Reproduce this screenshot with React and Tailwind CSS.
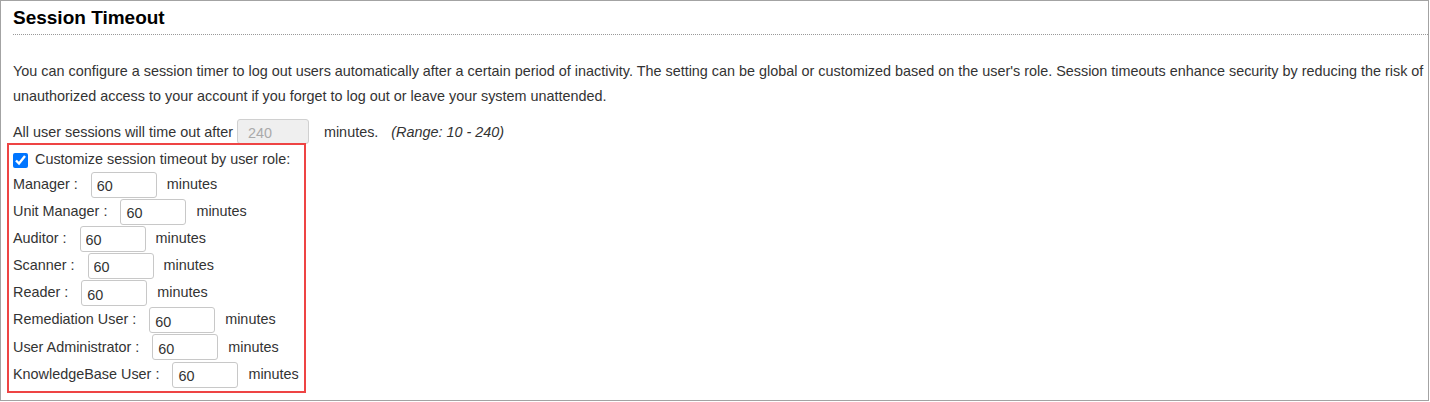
import React from 'react';

const roles = [
  'Manager',
  'Unit Manager',
  'Auditor',
  'Scanner',
  'Reader',
  'Remediation User',
  'User Administrator',
  'KnowledgeBase User',
];

const RoleRow = ({ label }) => (
  <div className="flex items-center h-[27.15px]">
    <span>{label} :</span>
    <input
      type="text"
      defaultValue="60"
      className="ml-[13px] w-[66px] h-[26px] border border-[#c8c8c8] rounded-[3px] pl-[5px] pt-[3px] text-[#333] outline-none"
    />
    <span className="ml-[10px]">minutes</span>
  </div>
);

const App = () => {
  return (
    <div
      className="w-[1429px] h-[401px] border border-[#a3a3a3] bg-white pl-[12px] text-[14.4px] text-[#333]"
      style={{ fontFamily: '"Liberation Sans", Arial, sans-serif' }}
    >
      <h2 className="pt-[6px] pb-[6px] text-[19px] leading-[21px] font-bold text-black border-b border-dotted border-[#999]">
        Session Timeout
      </h2>

      <p className="mt-[24px] leading-[25px] pr-[2px]">
        You can configure a session timer to log out users automatically after a certain period of inactivity. The setting can be global or customized based on the user's role. Session timeouts enhance security by reducing the risk of unauthorized access to your account if you forget to log out or leave your system unattended.
      </p>

      <div className="mt-[10px] flex items-center h-[24px]">
        <span className="pt-[3px]">All user sessions will time out after</span>
        <input
          type="text"
          disabled
          defaultValue="240"
          className="ml-[4px] w-[72px] h-[25px] shrink-0 border border-[#d0d0d0] rounded-[3px] bg-[#efefef] pl-[10px] pt-[3px] text-[#aaa]"
        />
        <span className="ml-[15px] pt-[3px]">minutes.</span>
        <span className="ml-[13px] pt-[3px] italic">(Range: 10 - 240)</span>
      </div>

      <div className="relative -ml-[6px] w-[299px] border-2 border-[#ee4444] pl-[4px] pt-[4px] pb-[3px]">
        <label className="flex items-center h-[22px]">
          <input type="checkbox" defaultChecked className="w-[15px] h-[15px] m-0 accent-[#0075ff]" />
          <span className="ml-[7px]">Customize session timeout by user role:</span>
        </label>
        {roles.map((r) => (
          <RoleRow key={r} label={r} />
        ))}
      </div>
    </div>
  );
};

export default App;
